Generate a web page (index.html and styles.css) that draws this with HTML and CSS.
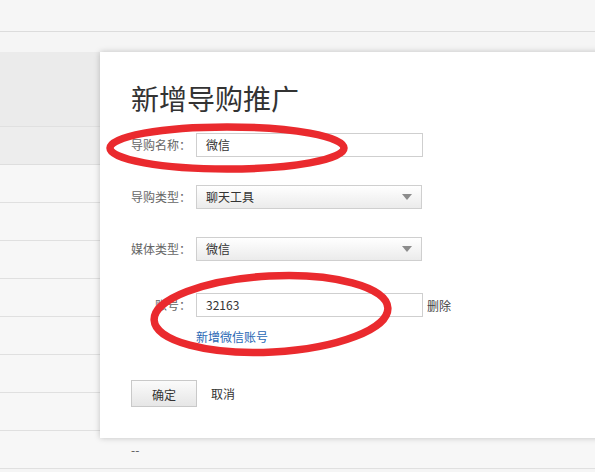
FILE: index.html
```html
<!DOCTYPE html>
<html lang="zh-CN">
<head>
<meta charset="utf-8">
<title>新增导购推广</title>
<link rel="stylesheet" href="styles.css">
</head>
<body>
<div class="topbar"></div>
<div class="content">
  <div class="spacer"></div>
  <div class="table">
    <div class="th th1"></div>
    <div class="th th2"></div>
    <div class="row"></div>
    <div class="row"></div>
    <div class="row"></div>
    <div class="row"></div>
    <div class="row"></div>
    <div class="row"></div>
    <div class="row"></div>
    <div class="row"><span class="cell">--</span></div>
  </div>
</div>

<div class="dialog">
  <h1 class="title">新增导购推广</h1>
  <div class="form">
    <div class="field">
      <label class="label">导购名称<span class="colon">：</span></label>
      <div class="input">微信</div>
    </div>
    <div class="field gap">
      <label class="label">导购类型<span class="colon">：</span></label>
      <div class="select"><span>聊天工具</span><i class="arrow"></i></div>
    </div>
    <div class="field gap">
      <label class="label">媒体类型<span class="colon">：</span></label>
      <div class="select"><span>微信</span><i class="arrow"></i></div>
    </div>
    <div class="field gap-lg">
      <label class="label">账号<span class="colon">：</span></label>
      <div class="input">32163</div>
      <a class="del">删除</a>
    </div>
    <div class="addrow"><a class="add">新增微信账号</a></div>
    <div class="actions">
      <button class="btn">确定</button>
      <a class="cancel">取消</a>
    </div>
  </div>
</div>

<svg class="marks" width="595" height="472" viewBox="0 0 595 472">
  <ellipse cx="227" cy="148" rx="117" ry="21" fill="none" stroke="#ea2a2e" stroke-width="7.5"/>
  <ellipse cx="271" cy="314" rx="117" ry="38" fill="none" stroke="#ea2a2e" stroke-width="7.5" transform="rotate(-3 271 314)"/>
</svg>
</body>
</html>
```

FILE: styles.css
```css
html, body {
  margin: 0;
  padding: 0;
}
body {
  width: 595px;
  height: 472px;
  overflow: hidden;
  background: #f5f5f5;
  font-family: "Noto Sans CJK SC", "Microsoft YaHei", "Noto Sans", sans-serif;
  font-size: 12px;
  color: #333;
  position: relative;
}
.topbar {
  height: 31px;
  background: #f6f6f6;
  border-bottom: 1px solid #dcdcdc;
}
.spacer {
  height: 20px;
  background: #f5f5f5;
}
.table {
  background: #f7f7f7;
}
.th {
  background: #ebebeb;
  border-bottom: 1px solid #e0e0e0;
}
.th1 { height: 74px; }
.th2 { height: 37px; background: #ededed; border-bottom-color: #dedede; }
.row {
  height: 37px;
  border-bottom: 1px solid #e0e0e0;
  display: flex;
  align-items: center;
}
.cell {
  padding-left: 131px;
  color: #555;
  font-size: 12px;
}

.dialog {
  position: absolute;
  left: 100px;
  top: 52px;
  width: 520px;
  height: 386px;
  background: #fff;
  box-shadow: 0 0 6px rgba(0, 0, 0, 0.22);
  padding: 29px 0 0 31px;
  box-sizing: border-box;
}
.title {
  margin: 0;
  font-size: 28px;
  line-height: 34px;
  font-weight: normal;
  color: #333;
}
.form {
  margin-top: 18px;
}
.field {
  display: flex;
  align-items: center;
  height: 24px;
}
.field.gap { margin-top: 28px; }
.field.gap-lg { margin-top: 32px; }
.label {
  flex: 0 0 65px;
  width: 65px;
  box-sizing: border-box;
  padding-right: 5px;
  text-align: right;
  white-space: nowrap;
  color: #666;
  font-size: 12px;
  line-height: 24px;
}
.colon {
  display: inline-block;
  width: 12px;
  text-align: center;
}
.input {
  flex: 0 0 227px;
  width: 227px;
  height: 24px;
  box-sizing: border-box;
  border: 1px solid #cfcfcf;
  background: #fff;
  padding-left: 9px;
  line-height: 22px;
  color: #333;
}
.select {
  flex: 0 0 226px;
  width: 226px;
  height: 24px;
  box-sizing: border-box;
  border: 1px solid #cfcfcf;
  background: linear-gradient(#ffffff, #ebebeb);
  padding-left: 9px;
  line-height: 22px;
  color: #333;
  display: flex;
  align-items: center;
  justify-content: space-between;
}
.arrow {
  width: 0;
  height: 0;
  border-left: 5px solid transparent;
  border-right: 5px solid transparent;
  border-top: 6px solid #8c8c8c;
  margin-right: 9px;
}
.del {
  margin-left: 4px;
  color: #444;
  white-space: nowrap;
}
.addrow {
  margin-top: 12px;
  padding-left: 65px;
  line-height: 16px;
}
.add {
  color: #2a68b5;
}
.actions {
  margin-top: 35px;
  display: flex;
  align-items: center;
}
.btn {
  width: 66px;
  height: 27px;
  border: 1px solid #c9c9c9;
  background: linear-gradient(#fbfbfb, #e6e6e6);
  font-family: inherit;
  font-size: 12px;
  color: #333;
  padding: 2px 0 0;
  margin: 0;
}
.cancel {
  margin-left: 14px;
  color: #333;
  font-size: 12px;
}
.marks {
  position: absolute;
  left: 0;
  top: 0;
  pointer-events: none;
}
```
